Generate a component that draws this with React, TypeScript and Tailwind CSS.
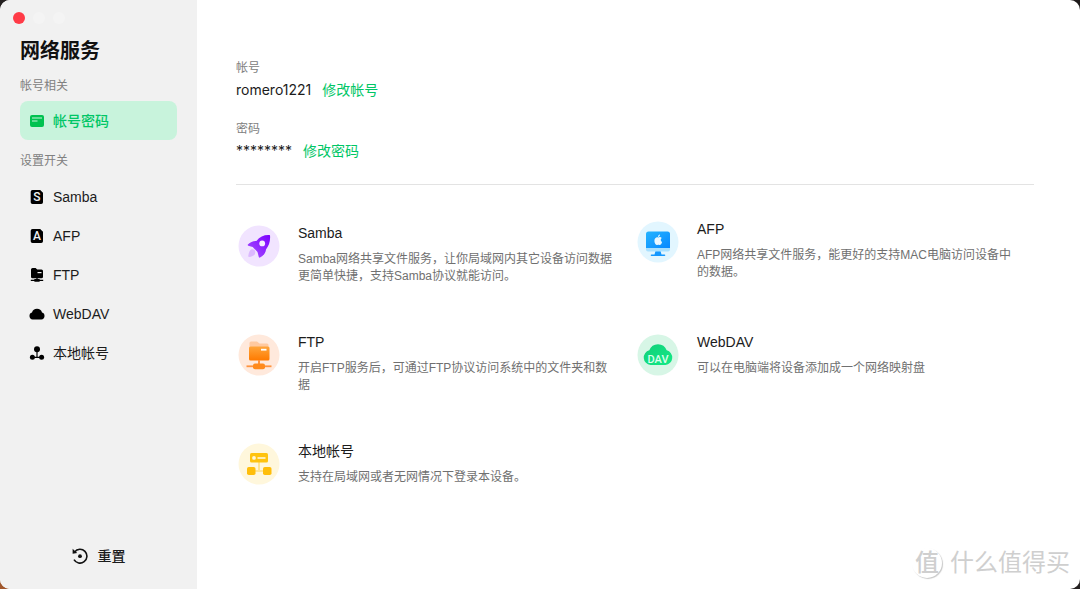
import clsx from 'clsx';
import type { ReactNode } from 'react';

type NavItem = { key: string; label: string; icon: ReactNode };
type Service = { title: string; desc: string; icon: ReactNode };

const CardIcon = () => (
  <svg viewBox="0 0 16 16" className="size-4" fill="none">
    <rect x="1" y="2" width="14" height="12" rx="2" fill="#00c250" />
    <path d="M3 5h10M3 8h5.500" stroke="#c8f3dc" strokeWidth="1.200" />
  </svg>
);

const LetterIcon = ({ letter }: { letter: string }) => (
  <svg viewBox="0 0 16 16" className="size-4">
    <path d="M3.500 1h7.700L14 3.800v9.400a1.800 1.800 0 0 1-1.800 1.800H3.500a1.800 1.800 0 0 1-1.800-1.800V2.800A1.800 1.800 0 0 1 3.500 1z" fill="#000" />
    <text x="7.900" y="12.200" textAnchor="middle" fontSize="12" fontWeight="500" fill="#f1f1f1" fontFamily="Roboto, sans-serif">
      {letter}
    </text>
  </svg>
);

const FolderIcon = () => (
  <svg viewBox="0 0 16 16" className="size-4">
    <path d="M2 2.600A1.600 1.600 0 0 1 3.600 1h3l1.600 1.600h4.300A1.500 1.500 0 0 1 14 4.100v5.600a1.500 1.500 0 0 1-1.500 1.500h-9A1.500 1.500 0 0 1 2 9.700z" />
    <path d="M8.500 5.600h4" stroke="#f1f1f1" strokeWidth="1.200" />
    <path d="M8 10v3M1.800 13.300h12.400" stroke="#000" strokeWidth="1.300" />
    <rect x="5" y="12" width="6" height="2.700" rx="1.200" />
  </svg>
);

const CloudIcon = () => (
  <svg viewBox="0 0 16 16" className="size-4">
    <path d="M3.600 13.500A3.600 3.600 0 0 1 3 6.500 5.200 5.200 0 0 1 13 6.500 3.600 3.600 0 0 1 12.400 13.500z" />
  </svg>
);

const UsersIcon = () => (
  <svg viewBox="0 0 16 16" className="size-4">
    <circle cx="8" cy="4.200" r="3" />
    <circle cx="3.400" cy="12.300" r="2.500" />
    <circle cx="12.600" cy="12.300" r="2.500" />
    <path d="M8 6v6.300M3 12.300h10" stroke="#000" strokeWidth="1.200" />
  </svg>
);

const ResetIcon = () => (
  <svg viewBox="0 0 16 16" className="size-4" fill="none">
    <path d="M2.600 3.900A6.900 6.900 0 1 1 2 11.600" stroke="#111" strokeWidth="1.600" />
    <path d="M.6.800v5l4.600-.8z" fill="#111" />
    <circle cx="8" cy="8.200" r="1.900" fill="#111" />
  </svg>
);

const RocketArt = () => (
  <svg viewBox="0 0 46 46" className="size-[46px] shrink-0">
    <defs>
      <linearGradient id="rocket" x1="0" y1="1" x2="1" y2="0">
        <stop offset="0" stopColor="#a855ff" />
        <stop offset="1" stopColor="#7c00ff" />
      </linearGradient>
    </defs>
    <circle cx="23" cy="23" r="20.500" fill="#f1e4ff" />
    <path d="M34 12.200c.6 5.600-1 10.500-4 14.200-.2 3.400-2.600 6.300-6 8.200-.6.300-1 .1-1.200-.5L21.500 29l-4.800-5-4.500-1.300c-.6-.2-.7-.7-.3-1.100 2.500-2.600 5.200-3.900 8.500-3.700 3.600-4.200 8-6.200 13.600-5.700z" fill="url(#rocket)" />
    <circle cx="26.200" cy="20.400" r="2.900" fill="#f6eeff" />
    <path d="M14.800 26.700c2-1.400 4.700.4 4.500 2.700-.2 2.900-3 4.400-6.300 4.500-.5 0-.8-.4-.7-.9.300-2.600.8-5 2.500-6.300z" fill="#dcb8ff" />
  </svg>
);

const MonitorArt = () => (
  <svg viewBox="0 0 46 46" className="size-[46px] shrink-0">
    <defs>
      <linearGradient id="screen" x1="0" y1="0" x2="1" y2="1">
        <stop offset="0" stopColor="#25b4ff" />
        <stop offset="1" stopColor="#0788ff" />
      </linearGradient>
    </defs>
    <circle cx="23" cy="23" r="20.500" fill="#e2f6ff" />
    <path d="M20.500 32h5l1 3.500h3a.8.8 0 0 1 0 1.600h-13a.8.8 0 0 1 0-1.600h3z" fill="#1598ff" />
    <path d="M11 27h24v3.500a2 2 0 0 1-2 2H13a2 2 0 0 1-2-2z" fill="#a8e0ff" />
    <path d="M13.500 12.500h19A2.500 2.500 0 0 1 35 15v14H11V15a2.500 2.500 0 0 1 2.500-2.500z" fill="url(#screen)" />
    <path d="M23.200 18.500c1-.5 2.700-.8 3.500.5-1.500 1-1.200 3.200.4 3.900-.5 1.600-1.500 3.200-2.600 3.100-.7-.1-1.200-.4-2-.1-1.600.6-3-1.800-3.100-4 0-2.700 2-4 3.800-3.400zM23 18c0-1.300.9-2.300 2-2.400 0 1.300-.8 2.300-2 2.400z" fill="#eaf8ff" />
  </svg>
);

const FtpArt = () => (
  <svg viewBox="0 0 46 46" className="size-[46px] shrink-0">
    <defs>
      <linearGradient id="folder" x1="0" y1="0" x2="0" y2="1">
        <stop offset="0" stopColor="#ffa53b" />
        <stop offset="1" stopColor="#ff7a00" />
      </linearGradient>
    </defs>
    <circle cx="23" cy="23" r="20.500" fill="#ffe9dc" />
    <path d="M13.500 11A1.500 1.500 0 0 1 15 9.500h6l2.500 2H31a1.500 1.500 0 0 1 1.500 1.500v6h-19z" fill="#ffc9a0" />
    <rect x="13" y="14.500" width="20.500" height="14" rx="1.500" fill="url(#folder)" />
    <rect x="25" y="16.800" width="5.500" height="1.800" fill="#fff" />
    <path d="M23 28v5" stroke="#ff9440" strokeWidth="2" />
    <path d="M10.500 34.300h25" stroke="#ff9440" strokeWidth="1.800" />
    <rect x="17" y="31.500" width="12" height="5.800" rx="2" fill="#ff8a1c" />
  </svg>
);

const DavArt = () => (
  <svg viewBox="0 0 46 46" className="size-[46px] shrink-0">
    <defs>
      <linearGradient id="dav" x1="0" y1="0" x2="1" y2="1">
        <stop offset="0" stopColor="#12cf79" />
        <stop offset="1" stopColor="#13ea86" />
      </linearGradient>
    </defs>
    <circle cx="23" cy="23" r="20.500" fill="#d7f6e6" />
    <path d="M15.500 33A7.500 7.500 0 0 1 14.300 18.300 9.300 9.300 0 0 1 31.700 18.300 7.500 7.500 0 0 1 30.500 33z" fill="url(#dav)" />
    <text x="23" y="31" textAnchor="middle" fontSize="11" fontWeight="500" fill="#d9ffec" fontFamily="Roboto, sans-serif">
      DAV
    </text>
  </svg>
);

const LocalArt = () => (
  <svg viewBox="0 0 46 46" className="size-[46px] shrink-0">
    <circle cx="23" cy="23" r="20.500" fill="#fff7dc" />
    <path d="M23 20v9M17 30h12" stroke="#ffdf80" strokeWidth="1.600" fill="none" />
    <rect x="14" y="12" width="18" height="9.500" rx="1.500" fill="#ffc30f" />
    <circle cx="18" cy="16.900" r="1.900" fill="#fff7dc" />
    <path d="M21.500 17h8" stroke="#fff7dc" strokeWidth="1.600" />
    <rect x="11" y="26" width="8.500" height="8" rx="1.800" fill="#ffbe0a" />
    <rect x="27" y="26" width="8.500" height="8" rx="1.800" fill="#ffbe0a" />
  </svg>
);

const navItems: NavItem[] = [
  { key: 'samba', label: 'Samba', icon: <LetterIcon letter="S" /> },
  { key: 'afp', label: 'AFP', icon: <LetterIcon letter="A" /> },
  { key: 'ftp', label: 'FTP', icon: <FolderIcon /> },
  { key: 'webdav', label: 'WebDAV', icon: <CloudIcon /> },
  { key: 'local', label: '本地帐号', icon: <UsersIcon /> },
];

const leftServices: Service[] = [
  {
    title: 'Samba',
    desc: 'Samba网络共享文件服务，让你局域网内其它设备访问数据更简单快捷，支持Samba协议就能访问。',
    icon: <RocketArt />,
  },
  {
    title: 'FTP',
    desc: '开启FTP服务后，可通过FTP协议访问系统中的文件夹和数据',
    icon: <FtpArt />,
  },
  {
    title: '本地帐号',
    desc: '支持在局域网或者无网情况下登录本设备。',
    icon: <LocalArt />,
  },
];

const rightServices: Service[] = [
  {
    title: 'AFP',
    desc: 'AFP网络共享文件服务，能更好的支持MAC电脑访问设备中的数据。',
    icon: <MonitorArt />,
  },
  {
    title: 'WebDAV',
    desc: '可以在电脑端将设备添加成一个网络映射盘',
    icon: <DavArt />,
  },
];

const NavButton = ({ item, active = false }: { item: NavItem; active?: boolean }) => (
  <button
    type="button"
    className={clsx(
      'flex h-[39px] w-full items-center gap-2 rounded-lg px-[9px] text-left text-sm',
      active ? 'bg-[#c8f3dc] font-medium text-[#00c666]' : 'text-[#1c1c1c]'
    )}
  >
    {item.icon}
    {item.label}
  </button>
);

const ServiceCard = ({ service }: { service: Service }) => (
  <article className="flex min-h-[62px] items-start gap-4">
    {service.icon}
    <div>
      <h2 className="text-sm leading-5 text-[#1c1c1c]">{service.title}</h2>
      <p className="mt-2 max-w-[320px] text-xs leading-[17px] text-[#707070]">{service.desc}</p>
    </div>
  </article>
);

const Credential = ({ label, value, action }: { label: string; value: string; action: string }) => (
  <div>
    <div className="text-xs leading-4 text-[#808080]">{label}</div>
    <div className="mt-1 flex h-5 items-center gap-[11px] text-sm leading-5">
      <span className="font-[Inter,'Noto_Sans_CJK_SC',sans-serif] text-[#1c1c1c]">{value}</span>
      <a href="#" className="text-[#00c666]">{action}</a>
    </div>
  </div>
);

const App = () => {
  return (
    <div className="min-h-screen bg-linear-to-tr from-[#a3582c] via-[#2b2626] via-10% to-[#1d1a1a] font-['Liberation_Sans','Noto_Sans_CJK_SC',sans-serif]">
      <div className="relative flex min-h-screen overflow-hidden rounded-[10px] bg-white">
        <aside className="flex w-[197px] shrink-0 flex-col bg-[#f1f1f1] px-5 pt-3 pb-[14px]">
          {/* Botones de ventana */}
          <div className="-ml-[7px] flex gap-2">
            <span className="size-3 rounded-full bg-[#ff3b47]" />
            <span className="size-3 rounded-full bg-[#f4f4f4]" />
            <span className="size-3 rounded-full bg-[#f4f4f4]" />
          </div>
          <h1 className="mt-[13px] text-xl leading-7 font-bold text-[#111]">网络服务</h1>

          <div className="mt-[13px] mb-[7px] text-xs leading-4 text-[#808080]">帐号相关</div>
          <NavButton item={{ key: 'account', label: '帐号密码', icon: <CardIcon /> }} active />

          <div className="mt-[13px] mb-2 text-xs leading-4 text-[#808080]">设置开关</div>
          <nav>
            {navItems.map((item) => (
              <NavButton key={item.key} item={item} />
            ))}
          </nav>

          <button type="button" className="mt-auto flex h-[39px] items-center justify-center gap-[10px] text-sm font-medium text-[#1c1c1c]">
            <ResetIcon />
            重置
          </button>
        </aside>

        <main className="flex-1 pt-[60px] pr-[46px] pl-[39px]">
          <section className="flex flex-col gap-[21px] border-b border-[#e3e3e3] pb-[23px]">
            <Credential label="帐号" value="romero1221" action="修改帐号" />
            <Credential label="密码" value="********" action="修改密码" />
          </section>

          <section className="mt-[34px] grid grid-cols-2">
            <div className="flex flex-col gap-[47px] pt-1">
              {leftServices.map((s) => (
                <ServiceCard key={s.title} service={s} />
              ))}
            </div>
            <div className="flex flex-col gap-[51px]">
              {rightServices.map((s) => (
                <ServiceCard key={s.title} service={s} />
              ))}
            </div>
          </section>
        </main>

        {/* Marca de agua */}
        <div className="absolute right-[10px] bottom-[10px] flex items-center gap-2 text-[#cfcfcf]">
          <span className="flex size-[30px] items-center justify-center rounded-full text-2xl leading-7 font-medium shadow-[1px_1px_1px_#c8c8c8]">
            值
          </span>
          <span className="text-2xl leading-8">什么值得买</span>
        </div>
      </div>
    </div>
  );
};

export default App;
